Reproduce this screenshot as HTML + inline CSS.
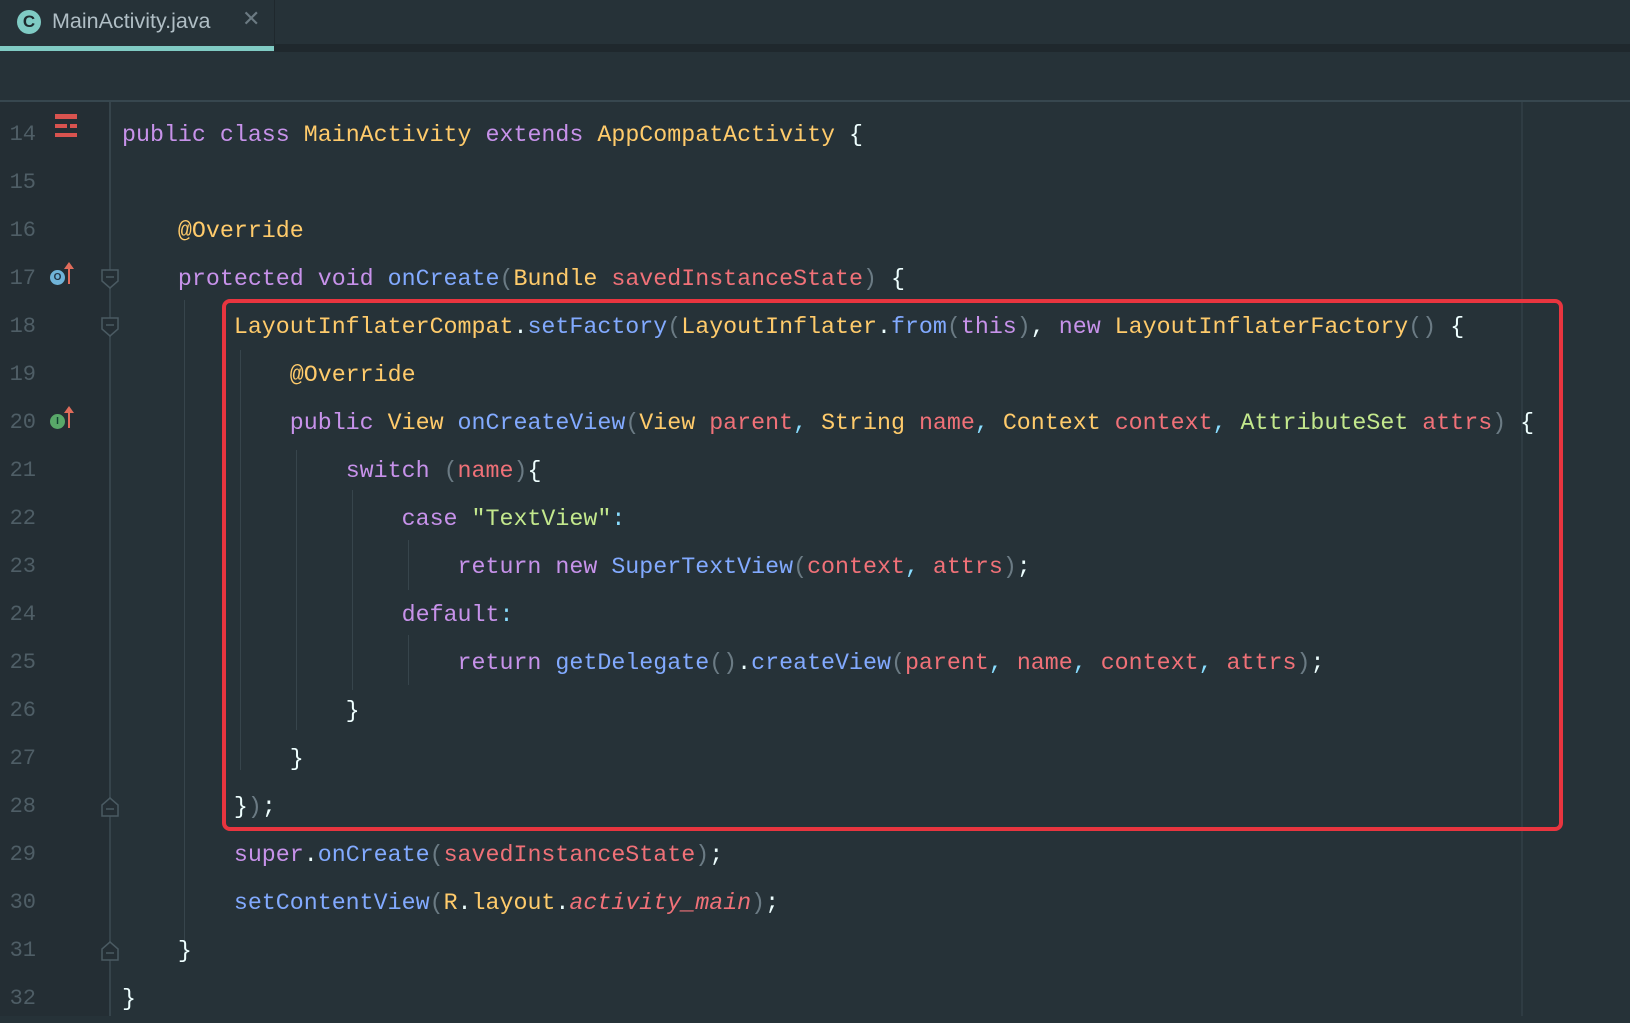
<!DOCTYPE html>
<html><head><meta charset="utf-8">
<style>
html,body{margin:0;padding:0;}
body{width:1630px;height:1016px;background:#263238;position:relative;overflow:hidden;font-family:"Liberation Mono",monospace;}
.tabbar{position:absolute;left:0;top:0;width:1630px;height:46px;background:#263238;}
.tabband{position:absolute;left:0;top:44px;width:1630px;height:8px;background:#1f282d;}
.tab{position:absolute;left:0;top:0;width:274px;height:52px;background:#263238;}
.tabline{position:absolute;left:0;top:46px;width:274px;height:5px;background:#80cbc4;}
.tabsep{position:absolute;left:274px;top:0;width:1px;height:46px;background:#1f282d;}
.ticon{position:absolute;left:17px;top:10px;width:24px;height:24px;border-radius:50%;background:#7fcbc4;color:#1d2a2e;font:bold 17px "Liberation Sans",sans-serif;text-align:center;line-height:24px;}
.tname{position:absolute;left:52px;top:9px;font:21.5px "Liberation Sans",sans-serif;color:#b0bec5;}
.tx{position:absolute;left:242px;top:6px;font:22px "Liberation Sans",sans-serif;color:#6b7a82;}
.hr{position:absolute;left:0;top:100px;width:1630px;height:2px;background:#37474f;}
.gutter{position:absolute;left:0;top:102px;width:110px;height:914px;background:#242e34;}
.fold{position:absolute;left:109px;top:102px;width:2px;height:914px;background:#36444b;}
.margin{position:absolute;left:1521px;top:102px;width:2px;height:914px;background:#2f3c43;}
.ln{position:absolute;left:0;width:36px;text-align:right;font-size:22px;color:#4f5e66;line-height:48px;margin-top:2px;}
.l{position:absolute;left:122px;font-size:23.3px;line-height:48px;white-space:pre;color:#eeffff;margin-top:2px;}
.k{color:#c792ea}.c{color:#ffcb6b}.m{color:#82aaff}.p{color:#f07178}.s{color:#c3e88d}.g{color:#6b7b84}.q{color:#89ddff}.i{color:#f07178;font-style:italic}
.box{position:absolute;left:222px;top:299px;width:1333px;height:524px;border:4px solid #e8353f;border-radius:8px;}
.guide{position:absolute;width:1px;background:#37454c;}
</style></head><body>
<div class="tabbar"></div><div class="tabband"></div>
<div class="tab"></div><div class="tabline"></div><div class="tabsep"></div>
<div class="ticon">C</div><div class="tname">MainActivity.java</div><div class="tx">✕</div>
<div class="hr"></div>
<div class="gutter"></div><div class="fold"></div><div class="margin"></div>

<div class="guide" style="left:184px;top:300px;height:660px"></div>
<div class="guide" style="left:240px;top:350px;height:420px"></div>
<div class="guide" style="left:296px;top:450px;height:280px"></div>
<div class="guide" style="left:352px;top:490px;height:200px"></div>
<div class="guide" style="left:408px;top:540px;height:50px"></div>
<div class="guide" style="left:408px;top:635px;height:50px"></div>

<div style="position:absolute;left:55px;top:114px;width:22px;height:5px;background:#d9534f"></div>
<div style="position:absolute;left:55px;top:124px;width:12px;height:4px;background:#d9534f"></div>
<div style="position:absolute;left:70px;top:124px;width:7px;height:4px;background:#d9534f"></div>
<div style="position:absolute;left:55px;top:133px;width:22px;height:4px;background:#d9534f"></div>
<div style="position:absolute;left:50px;top:270px;width:15px;height:15px;border-radius:50%;background:#6fb3d8;color:#234;font:bold 10px sans-serif;text-align:center;line-height:15px">O</div>
<div style="position:absolute;left:68px;top:264px;width:2px;height:20px;background:#e06c5b"></div>
<div style="position:absolute;left:64px;top:262px;width:0;height:0;border-left:5px solid transparent;border-right:5px solid transparent;border-bottom:7px solid #e06c5b"></div>
<div style="position:absolute;left:50px;top:414px;width:15px;height:15px;border-radius:50%;background:#59a869;font:bold 10px sans-serif;text-align:center;line-height:15px;color:#143">I</div>
<div style="position:absolute;left:68px;top:408px;width:2px;height:20px;background:#e06c5b"></div>
<div style="position:absolute;left:64px;top:406px;width:0;height:0;border-left:5px solid transparent;border-right:5px solid transparent;border-bottom:7px solid #e06c5b"></div>
<svg style="position:absolute;left:100px;top:268px" width="20" height="22"><path d="M2 2H18V13L10 20L2 13Z M6 9H14" fill="#242e34" stroke="#4a5a62" stroke-width="1.5"/></svg>
<svg style="position:absolute;left:100px;top:316px" width="20" height="22"><path d="M2 2H18V13L10 20L2 13Z M6 9H14" fill="#242e34" stroke="#4a5a62" stroke-width="1.5"/></svg>
<svg style="position:absolute;left:100px;top:796px" width="20" height="22"><path d="M2 20H18V9L10 2L2 9Z M6 13H14" fill="#242e34" stroke="#4a5a62" stroke-width="1.5"/></svg>
<svg style="position:absolute;left:100px;top:940px" width="20" height="22"><path d="M2 20H18V9L10 2L2 9Z M6 13H14" fill="#242e34" stroke="#4a5a62" stroke-width="1.5"/></svg>

<div class="ln" style="top:109px">14</div>
<div class="ln" style="top:157px">15</div>
<div class="ln" style="top:205px">16</div>
<div class="ln" style="top:253px">17</div>
<div class="ln" style="top:301px">18</div>
<div class="ln" style="top:349px">19</div>
<div class="ln" style="top:397px">20</div>
<div class="ln" style="top:445px">21</div>
<div class="ln" style="top:493px">22</div>
<div class="ln" style="top:541px">23</div>
<div class="ln" style="top:589px">24</div>
<div class="ln" style="top:637px">25</div>
<div class="ln" style="top:685px">26</div>
<div class="ln" style="top:733px">27</div>
<div class="ln" style="top:781px">28</div>
<div class="ln" style="top:829px">29</div>
<div class="ln" style="top:877px">30</div>
<div class="ln" style="top:925px">31</div>
<div class="ln" style="top:973px">32</div>

<div class="l" style="top:109px"><span class="k">public class</span> <span class="c">MainActivity</span> <span class="k">extends</span> <span class="c">AppCompatActivity</span> {</div>
<div class="l" style="top:205px">    <span class="c">@Override</span></div>
<div class="l" style="top:253px">    <span class="k">protected void</span> <span class="m">onCreate</span><span class="g">(</span><span class="c">Bundle</span> <span class="p">savedInstanceState</span><span class="g">)</span> {</div>
<div class="l" style="top:301px">        <span class="c">LayoutInflaterCompat</span>.<span class="m">setFactory</span><span class="g">(</span><span class="c">LayoutInflater</span>.<span class="m">from</span><span class="g">(</span><span class="k">this</span><span class="g">)</span>, <span class="k">new</span> <span class="c">LayoutInflaterFactory</span><span class="g">()</span> {</div>
<div class="l" style="top:349px">            <span class="c">@Override</span></div>
<div class="l" style="top:397px">            <span class="k">public</span> <span class="c">View</span> <span class="m">onCreateView</span><span class="g">(</span><span class="c">View</span> <span class="p">parent</span><span class="q">,</span> <span class="c">String</span> <span class="p">name</span><span class="q">,</span> <span class="c">Context</span> <span class="p">context</span><span class="q">,</span> <span class="s">AttributeSet</span> <span class="p">attrs</span><span class="g">)</span> {</div>
<div class="l" style="top:445px">                <span class="k">switch</span> <span class="g">(</span><span class="p">name</span><span class="g">)</span>{</div>
<div class="l" style="top:493px">                    <span class="k">case</span> <span class="s">"TextView"</span><span class="q">:</span></div>
<div class="l" style="top:541px">                        <span class="k">return new</span> <span class="m">SuperTextView</span><span class="g">(</span><span class="p">context</span><span class="q">,</span> <span class="p">attrs</span><span class="g">)</span>;</div>
<div class="l" style="top:589px">                    <span class="k">default</span><span class="q">:</span></div>
<div class="l" style="top:637px">                        <span class="k">return</span> <span class="m">getDelegate</span><span class="g">()</span>.<span class="m">createView</span><span class="g">(</span><span class="p">parent</span><span class="q">,</span> <span class="p">name</span><span class="q">,</span> <span class="p">context</span><span class="q">,</span> <span class="p">attrs</span><span class="g">)</span>;</div>
<div class="l" style="top:685px">                }</div>
<div class="l" style="top:733px">            }</div>
<div class="l" style="top:781px">        }<span class="g">)</span>;</div>
<div class="l" style="top:829px">        <span class="k">super</span>.<span class="m">onCreate</span><span class="g">(</span><span class="p">savedInstanceState</span><span class="g">)</span>;</div>
<div class="l" style="top:877px">        <span class="m">setContentView</span><span class="g">(</span><span class="c">R</span>.<span class="c">layout</span>.<span class="i">activity_main</span><span class="g">)</span>;</div>
<div class="l" style="top:925px">    }</div>
<div class="l" style="top:973px">}</div>

<div class="box"></div>
</body></html>
